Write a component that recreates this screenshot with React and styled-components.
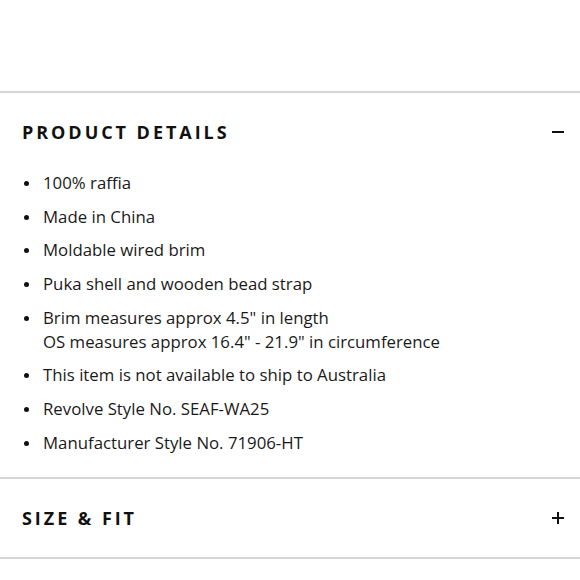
import React from "react";
import styled, { createGlobalStyle } from "styled-components";

const Global = createGlobalStyle`
  html, body { margin: 0; padding: 0; background: #fff; }
  body { font-family: "Open Sans", "Noto Sans", sans-serif; color: #111; }
`;

const Page = styled.div`
  width: 580px;
  padding-top: 91px;
`;

const Section = styled.section`
  border-top: 2px solid #d6d6d6;
  ${(p) => (p.$last ? "border-bottom: 2px solid #d6d6d6;" : "")}
`;

const Header = styled.div`
  height: 78px;
  display: flex;
  align-items: center;
  justify-content: space-between;
  padding: 0 16px 0 22px;
`;

const Title = styled.h2`
  margin: 0;
  font-family: "Open Sans", sans-serif;
  font-weight: 700;
  font-size: 18px;
  letter-spacing: 2.95px;
  color: #111;
`;

const Toggle = styled.span`
  position: relative;
  width: 12px;
  height: 12px;
  display: block;
  &::before, &::after {
    content: "";
    position: absolute;
    background: #111;
  }
  &::before { left: 0; right: 0; top: 5px; height: 2px; }
  &::after {
    display: ${(p) => (p.$open ? "none" : "block")};
    top: 0; bottom: 0; left: 5px; width: 2px;
  }
`;

const List = styled.ul`
  list-style: none;
  margin: 0;
  padding: 0 0 22px 0;
  display: flex;
  flex-direction: column;
  gap: 9.7px;
`;

const Item = styled.li`
  display: flex;
  align-items: flex-start;
  font-size: 16.8px;
  line-height: 24px;
  color: #1a1a1a;
  padding-left: 24px;
  &::before {
    content: "";
    width: 5px;
    height: 5px;
    border-radius: 50%;
    background: #111;
    margin-top: 10px;
    margin-right: 14px;
    flex-shrink: 0;
  }
`;

const items = [
  ["100% raffia"],
  ["Made in China"],
  ["Moldable wired brim"],
  ["Puka shell and wooden bead strap"],
  ['Brim measures approx 4.5" in length', 'OS measures approx 16.4" - 21.9" in circumference'],
  ["This item is not available to ship to Australia"],
  ["Revolve Style No. SEAF-WA25"],
  ["Manufacturer Style No. 71906-HT"],
];

export default function App() {
  return (
    <Page>
      <Global />
      <Section>
        <Header>
          <Title>PRODUCT DETAILS</Title>
          <Toggle $open />
        </Header>
        <List>
          {items.map((lines, i) => (
            <Item key={i}>
              <span>
                {lines.map((l, j) => (
                  <React.Fragment key={j}>
                    {j > 0 && <br />}
                    {l}
                  </React.Fragment>
                ))}
              </span>
            </Item>
          ))}
        </List>
      </Section>
      <Section $last>
        <Header>
          <Title>SIZE &amp; FIT</Title>
          <Toggle />
        </Header>
      </Section>
    </Page>
  );
}
